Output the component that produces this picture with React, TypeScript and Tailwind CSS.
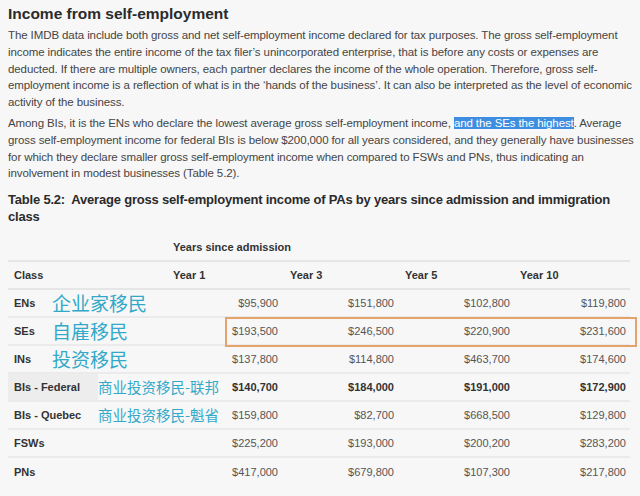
const rows = [
  { cls: "ENs", zh: "企业家移民", big: true, v: ["$95,900", "$151,800", "$102,800", "$119,800"] },
  { cls: "SEs", zh: "自雇移民", big: true, v: ["$193,500", "$246,500", "$220,900", "$231,600"], boxed: true },
  { cls: "INs", zh: "投资移民", big: true, v: ["$137,800", "$114,800", "$463,700", "$174,600"] },
  { cls: "BIs - Federal", zh: "商业投资移民-联邦", v: ["$140,700", "$184,000", "$191,000", "$172,900"], bold: true },
  { cls: "BIs - Quebec", zh: "商业投资移民-魁省", v: ["$159,800", "$82,700", "$668,500", "$129,800"] },
  { cls: "FSWs", v: ["$225,200", "$193,000", "$200,200", "$283,200"] },
  { cls: "PNs", v: ["$417,000", "$679,800", "$107,300", "$217,800"] },
];

const grid = "grid grid-cols-[157px_117px_116px_116px_116px]";
const zhFont = { fontFamily: '"Noto Sans CJK SC", "Noto Sans", sans-serif' };

export default function App() {
  return (
    <div
      className="w-[640px] h-[496px] overflow-hidden bg-[#f7f7f8] pl-2 pr-2 text-[#454545]"
      style={{ fontFamily: '"Liberation Sans", Arial, sans-serif' }}
    >
      <h2 className="pt-[5px] text-[15.5px] font-bold leading-[18px] text-[#2b2b2b]">Income from self-employment</h2>
      <p className="mt-[4px] whitespace-nowrap text-[11.5px] leading-[16.8px] tracking-[-0.1px]">
        The IMDB data include both gross and net self-employment income declared for tax purposes. The gross self-employment
        <br />
        income indicates the entire income of the tax filer’s unincorporated enterprise, that is before any costs or expenses are
        <br />
        deducted. If there are multiple owners, each partner declares the income of the whole operation. Therefore, gross self-
        <br />
        employment income is a reflection of what is in the ‘hands of the business’. It can also be interpreted as the level of economic
        <br />
        activity of the business.
      </p>
      <p className="mt-[4px] whitespace-nowrap text-[11.5px] leading-[16.8px] tracking-[-0.1px]">
        Among BIs, it is the ENs who declare the lowest average gross self-employment income,{" "}
        <span className="bg-[#3d8ee0] text-white">and the SEs the highest</span>. Average
        <br />
        gross self-employment income for federal BIs is below $200,000 for all years considered, and they generally have businesses
        <br />
        for which they declare smaller gross self-employment income when compared to FSWs and PNs, thus indicating an
        <br />
        involvement in modest businesses (Table 5.2).
      </p>
      <h3 className="mt-[9px] whitespace-nowrap text-[13px] font-bold leading-[17px] tracking-[-0.2px] text-[#2b2b2b]">
        Table 5.2:&nbsp; Average gross self-employment income of PAs by years since admission and immigration
        <br />
        class
      </h3>

      <div className="mt-[9px] w-[622px] text-[11px]">
        <div className={`${grid} h-[28px] items-center border-b-2 border-[#e6e6e6] font-bold text-[#333]`}>
          <div />
          <div className="col-span-4 pl-[8px]">Years since admission</div>
        </div>
        <div className={`${grid} h-[28px] items-center border-b-2 border-[#e6e6e6] font-bold text-[#333]`}>
          <div className="pl-[6px]">Class</div>
          <div className="pl-[8px]">Year 1</div>
          <div className="pl-[8px]">Year 3</div>
          <div className="pl-[7px]">Year 5</div>
          <div className="pl-[6px]">Year 10</div>
        </div>
        {rows.map((r, i) => (
          <div
            key={r.cls}
            className={`relative ${grid} h-[28px] items-center ${i < rows.length - 1 ? "border-b-2 border-[#ebebeb]" : ""}`}
          >
            <div className={`flex h-full items-center pl-[6px] ${r.bold ? "bg-[#ededed] w-[90px] overflow-visible whitespace-nowrap" : ""}`}>
              <span className={`font-bold text-[#333] ${r.big ? "w-[38px]" : r.zh ? "w-[84px] shrink-0" : ""}`}>{r.cls}</span>
              {r.zh && (
                <span
                  className={`whitespace-nowrap text-[#33a9c9] ${r.big ? "text-[19px] leading-[20px]" : "text-[14.5px] leading-[16px]"}`}
                  style={zhFont}
                >
                  {r.zh}
                </span>
              )}
            </div>
            {r.v.map((v, j) => (
              <div key={j} className={`pr-[4px] text-right ${r.bold ? "font-bold text-[#333]" : "text-[#555]"}`}>
                {v}
              </div>
            ))}
            {r.boxed && (
              <div className="pointer-events-none absolute left-[217px] top-[-1px] h-[30px] w-[412px] border-2 border-[#e4a36a]" />
            )}
          </div>
        ))}
      </div>
    </div>
  );
}
